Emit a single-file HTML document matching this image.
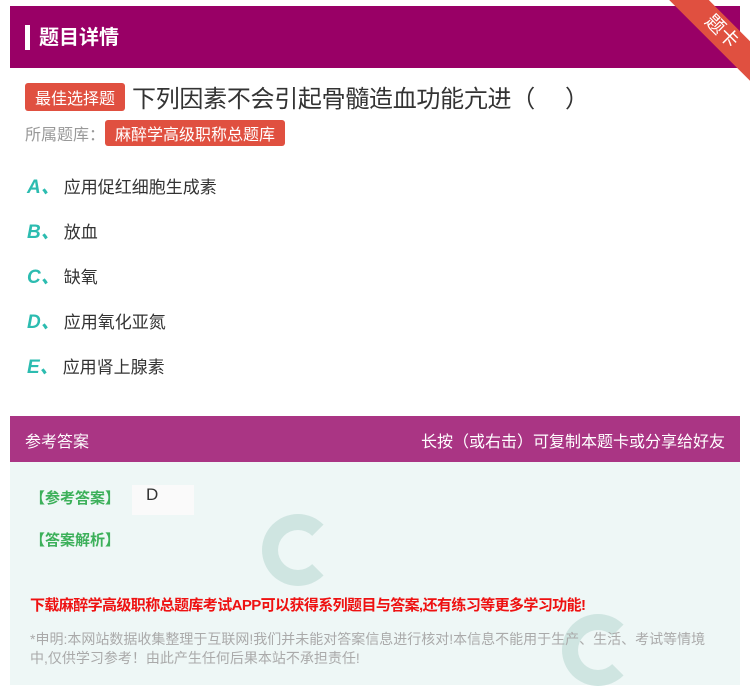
<!DOCTYPE html>
<html><head><meta charset="utf-8"><style>
body{margin:0;width:750px;height:685px;background:#fff;font-family:"Liberation Sans","Noto Sans CJK SC",sans-serif;position:relative;overflow:hidden}
.hdr{position:absolute;left:10px;top:6px;width:730px;height:62px;background:#990066}
.hdr .bar{position:absolute;left:15px;top:19px;width:5px;height:25px;background:#fff}
.hdr .t{position:absolute;left:29px;top:15px;color:#fff;font-size:20px;font-weight:bold}
.rib{position:absolute;right:-46px;top:18px;width:150px;height:28px;background:#e05040;transform:rotate(45deg);color:#fff;text-align:center;font-size:19px;line-height:28px;transform-origin:center}
.tag{display:inline-block;background:#e05040;color:#fff;border-radius:3px}
.q{position:absolute;left:25px;top:79px;font-size:24px;color:#333;letter-spacing:-0.3px}
.q .tag{font-size:16px;padding:2px 10px;vertical-align:3px;margin-right:7px;letter-spacing:0}
.lib{position:absolute;left:25px;top:120px;font-size:16px;color:#999}
.lib .tag{font-size:16px;padding:1px 10px}
.opt{position:absolute;left:27px;font-size:17px;color:#333}
.opt b{color:#2cbcb0;font-style:italic;font-size:19px;margin-right:4px}
.ah{position:absolute;left:10px;top:416px;width:730px;height:46px;background:#aa3584;color:#fff;font-size:16px}
.ab{position:absolute;left:10px;top:462px;width:730px;height:223px;background:#eef7f6}
.g{position:absolute;color:#3cb05a;font-size:15px;font-weight:bold}
.circ{position:absolute;border-radius:50%;border:16px solid #cfe5e1;border-right-color:transparent}
</style></head><body>
<div class="hdr"><div class="bar"></div><div class="t">题目详情</div></div>
<div class="rib">题卡</div>
<div class="q"><span class="tag">最佳选择题</span>下列因素不会引起骨髓造血功能亢进（　 ）</div>
<div class="lib">所属题库：<span class="tag">麻醉学高级职称总题库</span></div>
<div class="opt" style="top:172px"><b>A、</b>应用促红细胞生成素</div>
<div class="opt" style="top:217px"><b>B、</b>放血</div>
<div class="opt" style="top:262px"><b>C、</b>缺氧</div>
<div class="opt" style="top:307px"><b>D、</b>应用氧化亚氮</div>
<div class="opt" style="top:352px"><b>E、</b>应用肾上腺素</div>
<div class="ah"><span style="position:absolute;left:15px;top:12px">参考答案</span><span style="position:absolute;right:15px;top:12px">长按（或右击）可复制本题卡或分享给好友</span></div>
<div class="ab">
<div class="circ" style="left:252px;top:52px;width:40px;height:40px"></div>
<div class="circ" style="left:552px;top:152px;width:40px;height:40px"></div>
</div>
<div class="g" style="left:30px;top:487px">【参考答案】</div>
<div style="position:absolute;left:132px;top:485px;width:62px;height:30px;background:#fafafa;font-size:17px;color:#333;padding-left:14px;box-sizing:border-box">D</div>
<div class="g" style="left:30px;top:529px">【答案解析】</div>
<div style="position:absolute;left:30px;top:594px;color:#ee1111;font-size:15px;font-weight:bold;letter-spacing:-0.6px">下载麻醉学高级职称总题库考试APP可以获得系列题目与答案,还有练习等更多学习功能!</div>
<div style="position:absolute;left:30px;top:630px;width:690px;color:#aaa;font-size:14px;line-height:19px">*申明:本网站数据收集整理于互联网!我们并未能对答案信息进行核对!本信息不能用于生产、生活、考试等情境中,仅供学习参考！由此产生任何后果本站不承担责任!</div>
</body></html>
